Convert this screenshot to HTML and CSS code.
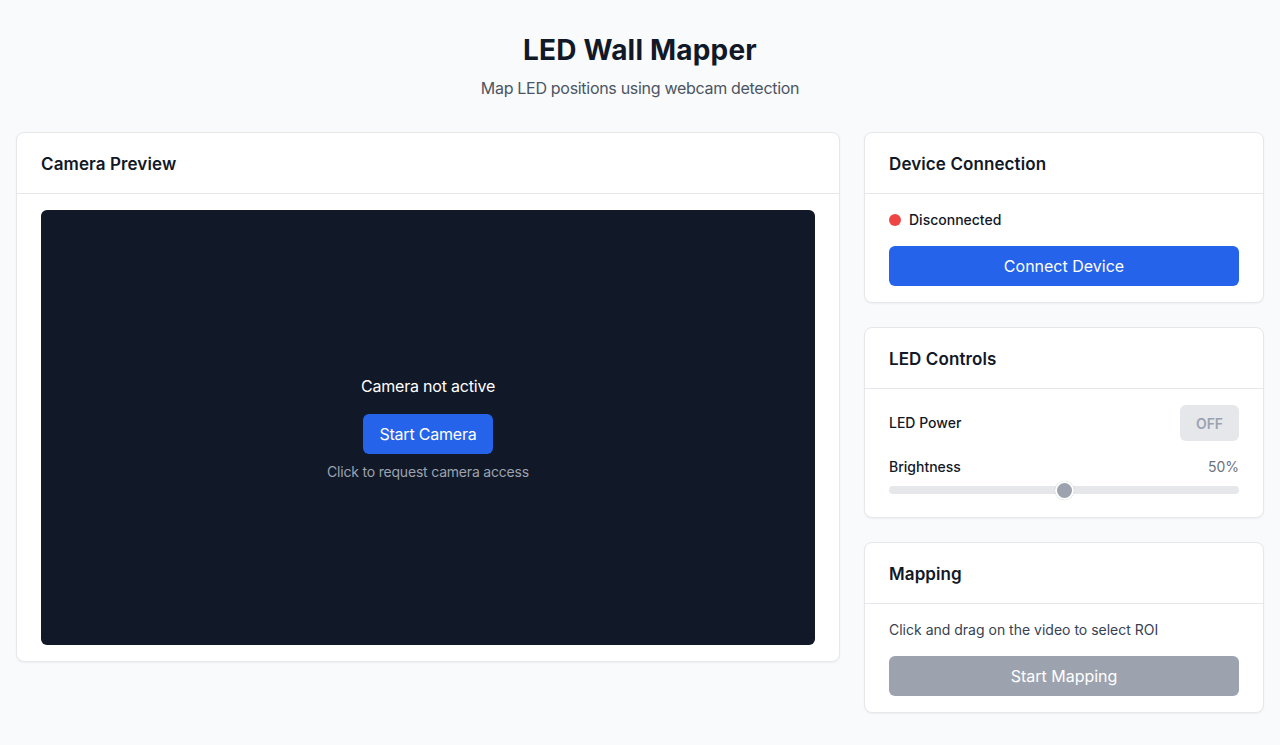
FILE: index.html
```html
<!DOCTYPE html>
<html>
<head>
<meta charset="utf-8">
<link rel="stylesheet" href="styles.css">
</head>
<body>
<div class="page">
  <header class="top">
    <h1 class="title">LED Wall Mapper</h1>
    <p class="subtitle">Map LED positions using webcam detection</p>
  </header>
  <main class="grid">
    <section class="card">
      <div class="card-head"><h2>Camera Preview</h2></div>
      <div class="card-body">
        <div class="video">
          <div class="video-msg">Camera not active</div>
          <button class="btn btn-blue btn-small">Start Camera</button>
          <div class="video-hint">Click to request camera access</div>
        </div>
      </div>
    </section>
    <aside class="side">
      <section class="card">
        <div class="card-head"><h2>Device Connection</h2></div>
        <div class="card-body stack">
          <div class="status"><span class="dot"></span><span>Disconnected</span></div>
          <button class="btn btn-blue btn-full">Connect Device</button>
        </div>
      </section>
      <section class="card">
        <div class="card-head"><h2>LED Controls</h2></div>
        <div class="card-body">
          <div class="row">
            <span class="label">LED Power</span>
            <button class="toggle">OFF</button>
          </div>
          <div class="row row-bright">
            <span class="label">Brightness</span>
            <span class="value">50%</span>
          </div>
          <div class="slider"><div class="thumb"></div></div>
        </div>
      </section>
      <section class="card">
        <div class="card-head"><h2>Mapping</h2></div>
        <div class="card-body stack">
          <p class="note">Click and drag on the video to select ROI</p>
          <button class="btn btn-gray btn-full">Start Mapping</button>
        </div>
      </section>
    </aside>
  </main>
</div>
</body>
</html>
```
FILE: styles.css
```css
* { box-sizing: border-box; }
html, body { margin: 0; padding: 0; }
body {
  background: #f9fafb;
  font-family: Inter, "Noto Sans", sans-serif;
  color: #111827;
}
.page { padding: 32px 16px; }
.top { text-align: center; margin-bottom: 32px; }
.title {
  margin: 0;
  font-size: 28px;
  line-height: 36px;
  font-weight: 700;
  color: #111827;
  letter-spacing: 0.2px;
}
.subtitle {
  margin: 8px 0 0;
  font-size: 16px;
  line-height: 24px;
  color: #4b5563;
  letter-spacing: -0.3px;
}
.grid {
  display: grid;
  grid-template-columns: 1fr 400px;
  gap: 24px;
  align-items: start;
}
.side { display: flex; flex-direction: column; gap: 24px; }
.card {
  background: #fff;
  border: 1px solid #e5e7eb;
  border-radius: 8px;
  box-shadow: 0 1px 2px rgba(0,0,0,0.05);
}
.card-head {
  padding: 19px 24px 17px;
  border-bottom: 1px solid #e5e7eb;
}
.card-head h2 {
  margin: 0;
  font-size: 17px;
  line-height: 24px;
  font-weight: 600;
  color: #111827;
  letter-spacing: 0.1px;
}
.card-body { padding: 16px 24px; }
.stack { display: flex; flex-direction: column; gap: 16px; }
.video {
  background: #111827;
  border-radius: 6px;
  aspect-ratio: 16 / 9;
  display: flex;
  flex-direction: column;
  align-items: center;
  justify-content: center;
}
.video-msg { color: #fff; font-size: 16px; line-height: 24px; letter-spacing: -0.2px; }
.video-hint { color: #9ca3af; font-size: 14px; line-height: 20px; margin-top: 8px; letter-spacing: -0.2px; }
.btn {
  border: none;
  border-radius: 6px;
  font-family: inherit;
  font-size: 16px;
  color: #fff;
  height: 40px;
  line-height: 40px;
  padding: 0 16px;
}
.btn-small { margin-top: 16px; padding: 0 16px; letter-spacing: -0.2px; }
.btn-blue { background: #2563eb; }
.btn-gray { background: #9ca3af; }
.btn-full { width: 100%; }
.status {
  display: flex;
  align-items: center;
  gap: 8px;
  font-size: 14px;
  line-height: 20px;
  font-weight: 500;
  color: #111827;
}
.dot { width: 12px; height: 12px; border-radius: 50%; background: #ef4444; }
.row {
  display: flex;
  justify-content: space-between;
  align-items: center;
  font-size: 14px;
  line-height: 20px;
}
.label { font-weight: 500; color: #111827; }
.value { color: #6b7280; }
.toggle {
  border: none;
  background: #e5e7eb;
  color: #9ca3af;
  font-family: inherit;
  font-size: 14px;
  font-weight: 600;
  border-radius: 6px;
  width: 59px;
  height: 36px;
}
.row-bright { margin-top: 16px; }
.slider {
  position: relative;
  margin-top: 9px;
  height: 8px;
  border-radius: 4px;
  background: #e5e7eb;
  margin-bottom: 7px;
}
.thumb {
  position: absolute;
  left: 50%;
  top: 50%;
  width: 19px;
  height: 19px;
  margin: -9.5px 0 0 -9.5px;
  border-radius: 50%;
  background: #9ca3af;
  border: 2px solid #fff;
  box-shadow: 0 0 1px rgba(0,0,0,0.3);
}
.note { margin: 0; font-size: 14px; line-height: 20px; color: #374151; }
```
